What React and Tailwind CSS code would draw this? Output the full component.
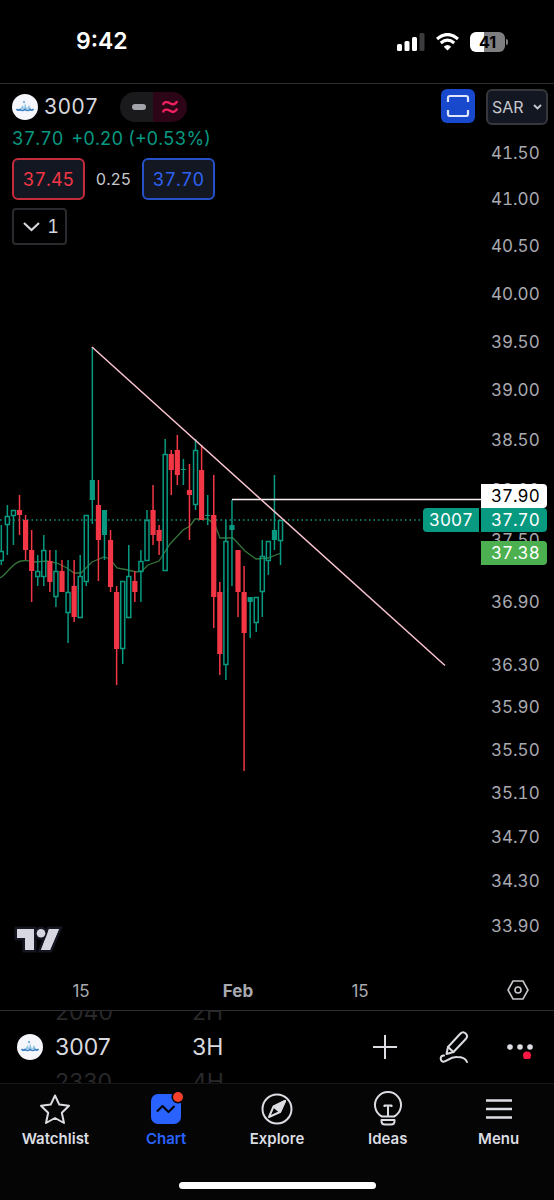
import React from 'react';

const UP = '#089981';
const DOWN = '#f23645';
const PANE_TOP = 84;
const BAR_STEP = 6.07;

// log scale of the right hand axis
const priceToTop = (price) => Math.round(69 + 3821 * Math.log(41.5 / price));

const PRICES = [
  '41.50', '41.00', '40.50', '40.00', '39.50', '39.00', '38.50', '38.00', '37.50',
  '36.90', '36.30', '35.90', '35.50', '35.10', '34.70', '34.30', '33.90',
];

// kind (h = hollow up, u = filled up, d = down), high, body top, body bottom, low
const CANDLES = [
  ['h', 525, 551, 560, 565], ['h', 505, 516, 524, 555], ['h', 510, 510, 515, 545],
  ['d', 495, 510, 515, 535], ['d', 515, 520, 550, 560], ['d', 530, 550, 571, 602],
  ['h', 555, 571, 576, 586], ['h', 535, 550, 576, 586], ['d', 550, 561, 582, 592],
  ['h', 550, 571, 596, 607], ['d', 560, 571, 592, 592], ['h', 560, 592, 612, 643],
  ['d', 560, 586, 617, 622], ['h', 555, 576, 617, 617], ['h', 515, 515, 581, 586],
  ['u', 347, 480, 500, 524], ['d', 480, 505, 540, 581], ['u', 510, 510, 535, 560],
  ['d', 530, 540, 587, 592], ['d', 586, 592, 649, 685], ['h', 581, 581, 648, 664],
  ['h', 545, 576, 617, 617], ['d', 571, 581, 592, 602], ['h', 550, 561, 571, 602],
  ['h', 510, 520, 560, 560], ['d', 485, 510, 535, 545], ['d', 525, 530, 541, 555],
  ['h', 439, 454, 570, 570], ['d', 450, 454, 470, 495], ['d', 435, 450, 475, 485],
  ['u', 459, 469, 470, 485], ['d', 464, 490, 495, 540], ['h', 439, 450, 504, 510],
  ['d', 445, 470, 520, 520], ['u', 495, 515, 516, 525], ['d', 475, 515, 597, 628],
  ['d', 582, 592, 654, 675], ['h', 520, 541, 664, 680], ['u', 500, 525, 530, 586],
  ['d', 550, 550, 592, 617], ['d', 566, 592, 633, 771], ['u', 597, 597, 602, 638],
  ['h', 597, 597, 622, 632], ['h', 540, 556, 591, 617], ['h', 541, 541, 560, 575],
  ['u', 475, 530, 540, 550], ['h', 520, 520, 540, 565],
];

const AVERAGE =
  'M0 578 C8 573 12 563 21 561 C26 560 30 561 35 562 L47 561 L57 563 L67 568 L74 573 L81 573 L92 562 L104 557 L110 559 L117 568 L128 570 L136 572 L142 571 L148 565 L159 561 L170 544 L183 530 L190 526 L195 519 L208 519 L215 525 L220 538 L233 538 L245 551 L256 559 L268 558 L281 553';

const DATES = [
  { left: 81, label: '15' },
  { left: 238, label: 'Feb', strong: true },
  { left: 360, label: '15' },
];

function Logo() {
  return (
    <svg className="w-[26px] h-[26px] shrink-0" viewBox="0 0 26 26" aria-hidden="true">
      <circle cx="13" cy="13" r="13" fill="#f4f6fb" />
      <path d="M8 15 L11 11 L12 15 L13 9 L15 15 L17 11 L19 15 Z" fill="#8fc4e2" />
      <path d="M4.500 15 Q6 17 8 15.500 Q10 17.500 13 15.500 Q16 17.500 18 15.500 Q20 17 21.500 15" stroke="#3a7fc4" strokeWidth="1.600" fill="none" />
      <circle cx="12" cy="8" r="1" fill="#5a9ed0" />
    </svg>
  );
}

function StatusBar() {
  return (
    <header className="flex items-center justify-between h-[84px] border-b border-[#2c2d33] pl-[76px] pr-[46px]">
      <span className="text-[23px] font-semibold text-white">9:42</span>
      <div className="flex items-center gap-[11px]">
        <svg width="28" height="18" viewBox="0 0 28 18" aria-hidden="true">
          <rect x="0" y="11" width="5" height="7" rx="1.500" fill="#fff" />
          <rect x="7.500" y="8" width="5" height="10" rx="1.500" fill="#fff" />
          <rect x="15" y="4" width="5" height="14" rx="1.500" fill="#fff" />
          <rect x="22.500" y="0" width="5" height="18" rx="1.500" fill="#3c3c3e" />
        </svg>
        <svg width="23" height="18" viewBox="0 0 23 18" fill="none" stroke="#fff" aria-hidden="true">
          <path d="M1 6 Q11.500 -3 22 6" strokeWidth="3.200" />
          <path d="M4.800 10 Q11.500 4.300 18.200 10" strokeWidth="3.200" />
          <path d="M11.500 17.500 L7.800 13.700 Q11.500 10.500 15.200 13.700 Z" fill="#fff" stroke="none" />
        </svg>
        <div className="flex items-center gap-px">
          <span className="w-[35px] h-5 rounded-md bg-linear-to-r from-white from-41% to-[#7e7e80] to-41% text-black text-[16px] leading-5 font-bold text-center">41</span>
          <span className="w-[2px] h-[6px] rounded-r bg-[#7e7e80]" />
        </div>
      </div>
    </header>
  );
}

function Legend() {
  return (
    <div className="absolute left-3 top-2 tabular-nums">
      <div className="flex items-center h-[30px]">
        <Logo />
        <span className="ml-[6px] w-[76px] text-[21px] text-[#d6d7dc]">3007</span>
        <div className="flex h-[30px] rounded-full overflow-hidden">
          <span className="flex items-center justify-center w-[33px] bg-[#1a1a1d]">
            <span className="w-[14px] h-[6px] rounded-sm bg-[#a3a4aa] ml-1" />
          </span>
          <span className="flex items-center justify-center w-[34px] bg-[#2c0617]">
            <svg width="16" height="14" viewBox="0 0 16 14" fill="none" stroke="#f0215f" strokeWidth="2.400" aria-hidden="true">
              <path d="M1 5 C1.500 1.500 5 1.500 8 3.200 C11 5 14 4.500 15 1" />
              <path d="M1 12.500 C1.500 9 5 9 8 10.700 C11 12.500 14 12 15 8.500" />
            </svg>
          </span>
        </div>
      </div>
      <p className="flex gap-2 mt-1 text-[18px] leading-[26px] text-[#089981]">
        <span>37.70</span>
        <span>+0.20 (+0.53%)</span>
      </p>
      <div className="flex items-center mt-1.5">
        <button type="button" className="w-[73px] h-[42px] rounded-md border-2 border-[#c42c3c] bg-[#131722] text-[18px] text-[#f23645]">37.45</button>
        <span className="w-[57px] text-center text-[16px] text-[#c8c9ce]">0.25</span>
        <button type="button" className="w-[73px] h-[42px] rounded-md border-2 border-[#2450c8] bg-[#131722] text-[18px] text-[#2f62f0]">37.70</button>
      </div>
      <button type="button" className="flex items-center justify-between mt-2 w-[55px] h-[37px] pl-[9px] pr-[6px] rounded border-2 border-[#2a2a2e] text-[18px] text-[#d6d7dc]">
        <svg width="17" height="10" viewBox="0 0 17 10" fill="none" stroke="currentColor" strokeWidth="2.200" aria-hidden="true">
          <path d="M1 1 L8.500 8 L16 1" />
        </svg>
        1
      </button>
    </div>
  );
}

function Candle({ candle, index }) {
  const [kind, high, top, bottom, low] = candle;
  const x = 1.3 + index * BAR_STEP;
  const color = kind === 'd' ? DOWN : UP;
  return (
    <g stroke={color} strokeWidth="1.5">
      {high < top && <line x1={x} y1={high} x2={x} y2={top} />}
      {low > bottom && <line x1={x} y1={bottom} x2={x} y2={low} />}
      {kind === 'h' ? (
        <rect x={x - 2} y={top + 0.5} width="4" height={bottom - top} fill="none" />
      ) : (
        <rect x={x - 2.6} y={top} width="5.2" height={bottom - top} fill={color} stroke="none" />
      )}
    </g>
  );
}

function Chart() {
  return (
    <svg className="flex-1 min-w-0 h-full" role="img" aria-label="3007 price chart">
      <g transform={`translate(0 ${-PANE_TOP})`}>
        <line x1="0" y1="520" x2="100%" y2="520" stroke={UP} strokeWidth="1.3" strokeDasharray="1.5 3" />
        <path d={AVERAGE} fill="none" stroke="#34743a" strokeWidth="1.300" />
        {CANDLES.map((candle, index) => (
          <Candle key={index} candle={candle} index={index} />
        ))}
        <line x1="232" y1="499.5" x2="100%" y2="499.5" stroke="#f7f0f2" strokeWidth="1.5" />
        <line x1="92" y1="347" x2="445" y2="665.5" stroke="#f9c4d0" strokeWidth="1.5" />
      </g>
    </svg>
  );
}

function PriceAxis() {
  return (
    <div className="relative w-[73px] text-[17px] leading-6 text-[#a9aab0] tabular-nums">
      {PRICES.map((price) => (
        <span key={price} className="absolute left-[10px] -translate-y-1/2" style={{ top: priceToTop(price) }}>
          {price}
        </span>
      ))}
      <div className="absolute right-[7px] top-[400px] flex flex-col items-end text-white">
        <span className="w-[66px] h-6 pl-[10px] rounded-r-sm bg-white text-black">37.90</span>
        <div className="flex gap-[2px]">
          <span className="w-[56px] h-6 text-center rounded-l-sm bg-[#089981]">3007</span>
          <span className="w-[66px] h-6 pl-[10px] rounded-r-sm bg-[#089981]">37.70</span>
        </div>
        <span className="w-[66px] h-6 mt-[9px] pl-[10px] rounded-r-sm bg-[#4caf50]">37.38</span>
      </div>
    </div>
  );
}

function TimeAxis() {
  return (
    <div className="relative h-[40px] text-[17px] leading-6 text-[#a9aab0]">
      {DATES.map(({ left, label, strong }) => (
        <span key={left} className={strong ? 'absolute top-[9px] -translate-x-1/2 font-bold' : 'absolute top-[9px] -translate-x-1/2'} style={{ left }}>
          {label}
        </span>
      ))}
      <button type="button" aria-label="Chart settings" className="absolute right-[25px] top-[10px]">
        <svg width="22" height="20" viewBox="0 0 22 20" fill="none" stroke="#c6c7cc" strokeWidth="1.600">
          <path d="M6 1 H16 L21 10 L16 19 H6 L1 10 Z" />
          <circle cx="11" cy="10" r="3" />
        </svg>
      </button>
    </div>
  );
}

function Picker({ items, className }) {
  return (
    <div className={`flex flex-col justify-center h-full overflow-hidden text-[23px] leading-[35px] ${className}`}>
      {items.map((item, index) => (
        <span key={item} className={index === 1 ? 'shrink-0 text-[#d9dadf]' : 'shrink-0 text-[#29292b]'}>
          {item}
        </span>
      ))}
    </div>
  );
}

function Toolbar() {
  return (
    <div className="flex items-center h-[74px] border-y border-t-[#2c2d33] border-b-[#17171a] pl-[17px] pr-5">
      <Logo />
      <Picker items={['2040', '3007', '2330']} className="ml-3 w-[137px]" />
      <Picker items={['2H', '3H', '4H']} className="flex-1" />
      <div className="flex items-center text-[#dcdde2]">
        <button type="button" aria-label="Add">
          <svg width="26" height="26" viewBox="0 0 26 26" fill="none" stroke="currentColor" strokeWidth="2">
            <path d="M13 1 V25 M1 13 H25" />
          </svg>
        </button>
        <button type="button" aria-label="Draw" className="ml-[41px]">
          <svg width="30" height="32" viewBox="0 0 30 32" fill="none" stroke="currentColor" strokeWidth="2" strokeLinejoin="round" strokeLinecap="round">
            <path d="M7.500 23 L9 16 L21.500 2.500 Q24 0 26.700 2.500 Q29.300 5 27 7.700 L14.500 21 Z" />
            <path d="M9 16 L14.500 21" />
            <path d="M5 24.500 C1.500 24 0.500 29 3.500 30.500 C7 32 10 25.500 18 26 C24 26 27 28 28 31" />
          </svg>
        </button>
        <button type="button" aria-label="More" className="ml-[37px]">
          <svg width="28" height="24" viewBox="0 0 28 24" fill="currentColor">
            <circle cx="4" cy="12" r="2.800" />
            <circle cx="14" cy="12" r="2.800" />
            <circle cx="24" cy="12" r="2.800" />
            <circle cx="21" cy="21" r="5" fill="#000" />
            <circle cx="21" cy="20.500" r="4" fill="#ff1744" />
          </svg>
        </button>
      </div>
    </div>
  );
}

const TABS = [
  {
    label: 'Watchlist',
    icon: <path d="M17 3.500 L21.300 12.600 L31 13.700 L23.800 20.700 L26 31 L17 26 L8 31 L10.200 20.700 L3 13.700 L12.700 12.600 Z" />,
  },
  {
    label: 'Chart',
    active: true,
    icon: (
      <>
        <rect x="2" y="2" width="30" height="30" rx="7" fill="#2962ff" stroke="none" />
        <path d="M8 19.500 L13.500 14 L19.500 20 L25.500 14" stroke="#000" />
        <circle cx="29" cy="5" r="6.500" fill="#050506" stroke="none" />
        <circle cx="29" cy="5" r="5" fill="#f7402c" stroke="none" />
      </>
    ),
  },
  {
    label: 'Explore',
    icon: (
      <>
        <circle cx="17" cy="17" r="14.500" />
        <path d="M25 9 L13.500 14.500 L9 25 L20 20 Z" />
        <path d="M25 9 L14 15 L20 20 Z" fill="currentColor" />
      </>
    ),
  },
  {
    label: 'Ideas',
    icon: (
      <>
        <path d="M11 24.500 A13 13 0 1 1 23 24.500 Z" />
        <path d="M13.500 15 V13.500 H20.500 V15 M17 13.500 V24" />
        <path d="M10.500 28 H23.500 V29 Q23.500 32.500 20 32.500 H14 Q10.500 32.500 10.500 29 Z" />
      </>
    ),
  },
  { label: 'Menu', icon: <path d="M4 8.500 H30 M4 17 H30 M4 25.500 H30" strokeWidth="2.600" /> },
];

function TabBar() {
  return (
    <nav className="bg-[#050506] pt-2">
      <div className="grid grid-cols-5">
        {TABS.map(({ label, icon, active }) => (
          <a key={label} href="#" className={active ? 'flex flex-col items-center text-[#2962ff]' : 'flex flex-col items-center text-[#dcdde2]'}>
            <svg className="w-[34px] h-[34px] overflow-visible" viewBox="0 0 34 34" fill="none" stroke="currentColor" strokeWidth="2" strokeLinejoin="round" aria-hidden="true">
              {icon}
            </svg>
            <span className="mt-[3px] text-[15px] leading-5 font-semibold">{label}</span>
          </a>
        ))}
      </div>
      <div className="mx-auto mt-[33px] mb-[11px] w-[197px] h-[7px] rounded-full bg-white" />
    </nav>
  );
}

export default function App() {
  return (
    <div className="flex flex-col min-h-screen bg-black font-['Inter',sans-serif]">
      <StatusBar />
      <main>
        <div className="relative flex h-[886px]">
          <Chart />
          <PriceAxis />
          <Legend />
          <div className="absolute right-[6px] top-[5px] flex items-start gap-[11px]">
            <button type="button" aria-label="Fullscreen" className="flex items-center justify-center w-[34px] h-[34px] rounded-md bg-[#1848cc]">
              <svg width="24" height="24" viewBox="0 0 24 24" fill="none" stroke="#dfe5fb" strokeWidth="2.200">
                <path d="M2 8 V4 Q2 2 4 2 H20 Q22 2 22 4 V8 M2 16 V20 Q2 22 4 22 H20 Q22 22 22 20 V16" />
              </svg>
            </button>
            <button type="button" className="flex items-center justify-between w-[62px] h-[36px] pl-[4px] pr-[4px] rounded-md border-2 border-[#36373d] bg-[#131722] text-[16px] text-[#c8c9ce]">
              SAR
              <svg width="9" height="6" viewBox="0 0 9 6" fill="none" stroke="currentColor" strokeWidth="1.800" aria-hidden="true">
                <path d="M1 1 L4.500 4.500 L8 1" />
              </svg>
            </button>
          </div>
          <svg className="absolute left-[14px] bottom-4 w-[50px] h-[28px]" viewBox="0 0 50 28" fill="#d6d7e0" aria-label="TradingView">
            <g stroke="#141622" strokeWidth="5" paintOrder="stroke">
              <path d="M3 3 H20 V24 H11 V12 H3 Z" />
              <path d="M35 3 H45 L36 24 H27 Z" />
              <circle cx="27" cy="7.200" r="4.300" />
            </g>
            <path d="M3 3 H20 V24 H11 V12 H3 Z M35 3 H45 L36 24 H27 Z" />
          </svg>
        </div>
        <TimeAxis />
        <Toolbar />
      </main>
      <TabBar />
    </div>
  );
}
